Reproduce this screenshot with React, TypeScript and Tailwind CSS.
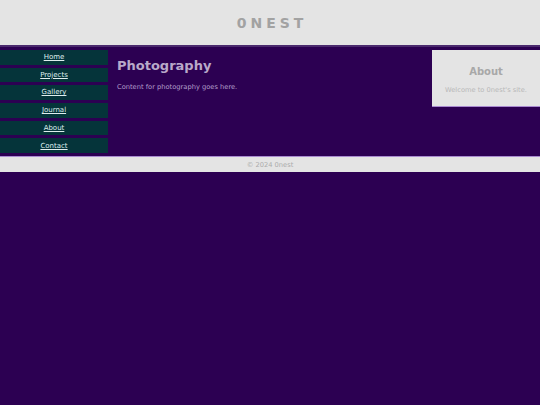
import React from "react";

const links = ["Home", "Projects", "Gallery", "Journal", "About", "Contact"];

export default function App() {
  return (
    <div
      className="min-h-[405px] w-full bg-[#2c0052]"
      style={{ fontFamily: '"DejaVu Sans", Verdana, sans-serif' }}
    >
      <header className="flex h-[47px] items-center justify-center border-b-2 border-[#4b2a6e] bg-[#e4e4e4]">
        <h1 className="pl-[4px] pt-[1px] text-[14px] font-bold uppercase tracking-[4px] text-[#a2a2a2]">
          0nest
        </h1>
      </header>
      <div className="flex h-[109px] pt-[3px]">
        <nav className="flex w-[108px] flex-col gap-[3px]">
          {links.map((l) => (
            <a
              key={l}
              href="#"
              className="flex h-[14.7px] items-center justify-center bg-[#05343a] text-[7px] text-[#dfeeee] underline"
            >
              {l}
            </a>
          ))}
        </nav>
        <main className="flex-1 px-[9px] pt-[7px]">
          <h2 className="text-[13px] font-bold leading-[18px] text-[#b9a9c9]">Photography</h2>
          <p className="mt-[7px] text-[6.7px] text-[#b39fcb]">Content for photography goes here.</p>
        </main>
        <aside className="flex h-[57px] w-[108px] flex-col items-center border-b border-[#a98bd0] bg-[#e4e4e4] pt-[15px]">
          <h3 className="text-[10px] font-bold leading-[14px] text-[#a8a8a8]">About</h3>
          <p className="mt-[6px] text-[6.7px] text-[#b8b8b8]">Welcome to 0nest's site.</p>
        </aside>
      </div>
      <footer className="flex h-[16px] items-center justify-center border-t border-[#a98bd0] bg-[#e4e4e4] pt-[2px] text-[6.7px] text-[#ababab]">
        © 2024 0nest
      </footer>
    </div>
  );
}
